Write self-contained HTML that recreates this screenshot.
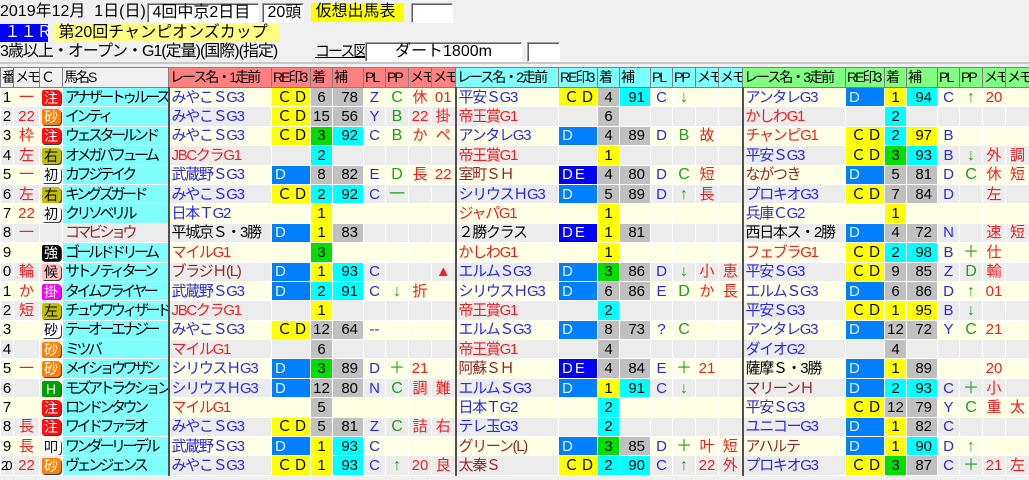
<!DOCTYPE html>
<html><head><meta charset="utf-8"><style>
body{margin:0;width:1029px;height:480px;overflow:hidden;background:#f0f0f0;font-family:"Liberation Sans","Noto Sans CJK JP",sans-serif;font-size:15px;color:#000;position:relative}
.a{position:absolute;white-space:nowrap;line-height:18px;font-size:16px}
.box{background:#fff;border:1px solid #a0a0a0;border-right-color:#fff;border-bottom-color:#fff;box-shadow:inset 1px 1px 0 #606060}
table{position:absolute;left:0;top:67px;border-collapse:collapse;table-layout:fixed;width:1029px}
td{border:1px solid #fff;padding:0;text-align:center;white-space:nowrap;overflow:hidden;height:18.4px;line-height:17px}
tr.hd td{background:#f0f0f0;border:1px solid #808080;height:19px;text-align:left;padding-left:1px;font-size:14px;letter-spacing:-2px}
tr.hd td.p{background:#ff8080}tr.hd td.q{background:#80ffff}tr.hd td.w{background:#80ff80}
tr.o{background:#ffffe6}tr.e{background:#ececec}
td.nm{background:#80ffff;text-align:left;padding-left:2px;letter-spacing:-3.5px}
td.n{text-align:left;border-left:2px solid #505050;padding-left:2px;letter-spacing:-1.3px}
td.m{color:#f02020}
.b{color:#2828f0}.r{color:#f02020}.br{color:#902828}.k{color:#000}
td.y{background:#ffff00;text-align:left;padding-left:5px;letter-spacing:1px}
td.d{background:#0080ff;color:#e8f4ff;text-align:left;padding-left:3px}
td.de{background:#0000ff;color:#fff;text-align:left;padding-left:3px;letter-spacing:2px}
td.c1{background:#ffff00}td.c2{background:#00ffff}td.c3{background:#00e000}td.cg{background:#c0c0c0}
td.h{text-align:right;padding-right:5px}
td.hc{background:#00ffff}td.hy{background:#ffff00}td.hg{background:#c0c0c0}
td.pl{color:#2828f0}td.pp{color:#20a020;font-size:16px}
.bd{display:inline-block;width:19px;height:16px;line-height:16px;border-radius:2px 4px 4px 2px;box-shadow:1px 1px 0 #404040;font-size:14px;vertical-align:top;margin-top:1px;letter-spacing:0}
.zr{background:#ff1010;color:#fff}.sa{background:#ff8000;color:#fff}.ol{background:#c0c000;color:#000}.wh{background:#fff;color:#000}.bk{background:#000;color:#fff}.pk{background:#ffc0c0;color:#000}.mg{background:#ff00ff;color:#fff}.gr{background:#00a000;color:#fff}
</style></head><body>
<div class="a" style="left:0;top:3px">2019年12月&nbsp;&nbsp;1日(日)</div>
<div class="a box" style="left:147px;top:3px;width:110px;height:18px">&nbsp;4回中京2日目</div>
<div class="a box" style="left:262px;top:3px;width:40px;height:18px">&nbsp;20頭</div>
<div class="a" style="left:311px;top:3px;width:93px;height:19px;background:#ffff00">&nbsp;仮想出馬表</div>
<div class="a box" style="left:411px;top:3px;width:40px;height:18px"></div>
<div class="a" style="left:0;top:24px;width:48px;height:18px;background:#0000ff;color:#fff">&nbsp;１１Ｒ</div>
<div class="a" style="left:54px;top:24px;width:225px;height:18px;background:#ffff80">&nbsp;第20回チャンピオンズカップ</div>
<div class="a" style="left:0;top:43px;letter-spacing:-1px">3歳以上・オープン・G1(定量)(国際)(指定)</div>
<div class="a" style="left:315px;top:43px;text-decoration:underline;font-size:15px;letter-spacing:-2px">コース図</div>
<div class="a box" style="left:365px;top:42px;width:155px;height:18px;text-align:center">ダート1800m</div>
<div class="a box" style="left:527px;top:42px;width:31px;height:18px"></div>
<div class="a" style="left:0;top:62px;width:1029px;height:2px;background:#c8c8c8"></div>
<table>
<colgroup><col style="width:13px"><col style="width:26px"><col style="width:23px"><col style="width:106px">
<col style="width:103px"><col style="width:39px"><col style="width:22px"><col style="width:31px"><col style="width:22px"><col style="width:23px"><col style="width:23px"><col style="width:24px">
<col style="width:103px"><col style="width:39px"><col style="width:22px"><col style="width:31px"><col style="width:22px"><col style="width:23px"><col style="width:23px"><col style="width:24px">
<col style="width:103px"><col style="width:39px"><col style="width:22px"><col style="width:31px"><col style="width:22px"><col style="width:23px"><col style="width:23px"><col style="width:24px"></colgroup>
<tr class="hd"><td>番</td><td>メモ</td><td>Ｃ</td><td>馬名S</td>
<td class="p">レース名・1走前</td><td class="p">RE印3</td><td class="p">着</td><td class="p">補</td><td class="p">PL</td><td class="p">PP</td><td class="p">メモ</td><td class="p">メモ</td>
<td class="q">レース名・2走前</td><td class="q">RE印3</td><td class="q">着</td><td class="q">補</td><td class="q">PL</td><td class="q">PP</td><td class="q">メモ</td><td class="q">メモ</td>
<td class="w">レース名・3走前</td><td class="w">RE印3</td><td class="w">着</td><td class="w">補</td><td class="w">PL</td><td class="w">PP</td><td class="w">メモ</td><td class="w">メモ</td></tr>

<tr class="o"><td>1</td><td class="m">一</td><td><span class="bd zr">注</span></td><td class="nm">アナザートゥルース</td>
<td class="n b">みやこＳG3</td><td class="y">ＣＤ</td><td class="cg">6</td><td class="h hg">78</td><td class="pl">Z</td><td class="pp">C</td><td class="m">休</td><td class="m">01</td>
<td class="n b">平安ＳG3</td><td class="y">ＣＤ</td><td class="cg">4</td><td class="h hc">91</td><td class="pl">C</td><td class="pp">↓</td><td></td><td></td>
<td class="n b">アンタレG3</td><td class="d">D</td><td class="c1">1</td><td class="h hc">94</td><td class="pl">C</td><td class="pp">↑</td><td class="m">20</td><td></td></tr>

<tr class="e"><td>2</td><td class="m">22</td><td><span class="bd sa">砂</span></td><td class="nm">インティ</td>
<td class="n b">みやこＳG3</td><td class="y">ＣＤ</td><td class="cg">15</td><td class="h hg">56</td><td class="pl">Y</td><td class="pp">B</td><td class="m">22</td><td class="m">掛</td>
<td class="n r">帝王賞G1</td><td></td><td class="cg">6</td><td></td><td></td><td></td><td></td><td></td>
<td class="n r">かしわG1</td><td></td><td class="c2">2</td><td></td><td></td><td></td><td></td><td></td></tr>

<tr class="o"><td>3</td><td class="m">枠</td><td><span class="bd zr">注</span></td><td class="nm">ウェスタールンド</td>
<td class="n b">みやこＳG3</td><td class="y">ＣＤ</td><td class="c3">3</td><td class="h hc">92</td><td class="pl">C</td><td class="pp">B</td><td class="m">か</td><td class="m">ペ</td>
<td class="n b">アンタレG3</td><td class="d">D</td><td class="cg">4</td><td class="h hg">89</td><td class="pl">D</td><td class="pp">B</td><td class="m">故</td><td></td>
<td class="n r">チャンピG1</td><td class="y">ＣＤ</td><td class="c2">2</td><td class="h hy">97</td><td class="pl">B</td><td></td><td></td><td></td></tr>

<tr class="e"><td>4</td><td class="m">左</td><td><span class="bd ol">右</span></td><td class="nm">オメガパフューム</td>
<td class="n r">JBCクラG1</td><td></td><td class="c2">2</td><td></td><td></td><td></td><td></td><td></td>
<td class="n r">帝王賞G1</td><td></td><td class="c1">1</td><td></td><td></td><td></td><td></td><td></td>
<td class="n b">平安ＳG3</td><td class="y">ＣＤ</td><td class="c3">3</td><td class="h hc">93</td><td class="pl">B</td><td class="pp">↓</td><td class="m">外</td><td class="m">調</td></tr>

<tr class="o"><td>5</td><td class="m">一</td><td><span class="bd wh">初</span></td><td class="nm">カフジテイク</td>
<td class="n b">武蔵野ＳG3</td><td class="d">D</td><td class="cg">8</td><td class="h hg">82</td><td class="pl">E</td><td class="pp">D</td><td class="m">長</td><td class="m">22</td>
<td class="n br">室町ＳＨ</td><td class="de">DE</td><td class="cg">4</td><td class="h hg">80</td><td class="pl">D</td><td class="pp">C</td><td class="m">短</td><td></td>
<td class="n br">ながつき</td><td class="d">D</td><td class="cg">5</td><td class="h hg">81</td><td class="pl">D</td><td class="pp">C</td><td class="m">休</td><td class="m">短</td></tr>

<tr class="e"><td>6</td><td class="m">左</td><td><span class="bd ol">右</span></td><td class="nm">キングズガード</td>
<td class="n b">みやこＳG3</td><td class="y">ＣＤ</td><td class="c2">2</td><td class="h hc">92</td><td class="pl">C</td><td class="pp">一</td><td></td><td></td>
<td class="n b">シリウスＨG3</td><td class="d">D</td><td class="cg">5</td><td class="h hg">89</td><td class="pl">D</td><td class="pp">↑</td><td class="m">長</td><td></td>
<td class="n b">プロキオG3</td><td class="y">ＣＤ</td><td class="cg">7</td><td class="h hg">84</td><td class="pl">D</td><td></td><td class="m">左</td><td></td></tr>

<tr class="o"><td>7</td><td class="m">22</td><td><span class="bd wh">初</span></td><td class="nm">クリソベリル</td>
<td class="n b">日本ＴG2</td><td></td><td class="c1">1</td><td></td><td></td><td></td><td></td><td></td>
<td class="n r">ジャパG1</td><td></td><td class="c1">1</td><td></td><td></td><td></td><td></td><td></td>
<td class="n b">兵庫ＣG2</td><td></td><td class="c1">1</td><td></td><td></td><td></td><td></td><td></td></tr>

<tr class="e"><td>8</td><td class="m">一</td><td></td><td class="br" style="text-align:left;padding-left:2px;letter-spacing:-3.5px">コマビショウ</td>
<td class="n k">平城京Ｓ・3勝</td><td class="d">D</td><td class="c1">1</td><td class="h hg">83</td><td></td><td></td><td></td><td></td>
<td class="n k">２勝クラス</td><td class="de">DE</td><td class="c1">1</td><td class="h hg">81</td><td></td><td></td><td></td><td></td>
<td class="n k">西日本ス・2勝</td><td class="d">D</td><td class="cg">4</td><td class="h hg">72</td><td class="pl">N</td><td></td><td class="m">速</td><td class="m">短</td></tr>

<tr class="o"><td>9</td><td></td><td><span class="bd bk">強</span></td><td class="nm">ゴールドドリーム</td>
<td class="n r">マイルG1</td><td></td><td class="c3">3</td><td></td><td></td><td></td><td></td><td></td>
<td class="n r">かしわG1</td><td></td><td class="c1">1</td><td></td><td></td><td></td><td></td><td></td>
<td class="n r">フェブラG1</td><td class="y">ＣＤ</td><td class="c2">2</td><td class="h hc">98</td><td class="pl">B</td><td class="pp">＋</td><td class="m">仕</td><td></td></tr>

<tr class="e"><td>0</td><td class="m">輪</td><td><span class="bd pk">候</span></td><td class="nm">サトノティターン</td>
<td class="n br">ブラジＨ(L)</td><td class="d">D</td><td class="c1">1</td><td class="h hc">93</td><td class="pl">C</td><td></td><td></td><td class="m">▲</td>
<td class="n b">エルムＳG3</td><td class="d">D</td><td class="c3">3</td><td class="h hg">86</td><td class="pl">D</td><td class="pp">↓</td><td class="m">小</td><td class="m">恵</td>
<td class="n b">平安ＳG3</td><td class="y">ＣＤ</td><td class="cg">9</td><td class="h hg">85</td><td class="pl">Z</td><td class="pp">D</td><td class="m">輸</td><td></td></tr>

<tr class="o"><td>1</td><td class="m">か</td><td><span class="bd mg">掛</span></td><td class="nm">タイムフライヤー</td>
<td class="n b">武蔵野ＳG3</td><td class="d">D</td><td class="c2">2</td><td class="h hc">91</td><td class="pl">C</td><td class="pp">↓</td><td class="m">折</td><td></td>
<td class="n b">シリウスＨG3</td><td class="d">D</td><td class="cg">6</td><td class="h hg">86</td><td class="pl">E</td><td class="pp">D</td><td class="m">か</td><td class="m">長</td>
<td class="n b">エルムＳG3</td><td class="d">D</td><td class="cg">6</td><td class="h hg">86</td><td class="pl">D</td><td class="pp">↑</td><td class="m">01</td><td></td></tr>

<tr class="e"><td>2</td><td class="m">短</td><td><span class="bd ol">左</span></td><td class="nm">チュウワウィザード</td>
<td class="n r">JBCクラG1</td><td></td><td class="c1">1</td><td></td><td></td><td></td><td></td><td></td>
<td class="n r">帝王賞G1</td><td></td><td class="c2">2</td><td></td><td></td><td></td><td></td><td></td>
<td class="n b">平安ＳG3</td><td class="y">ＣＤ</td><td class="c1">1</td><td class="h hy">95</td><td class="pl">B</td><td class="pp">↓</td><td></td><td></td></tr>

<tr class="o"><td>3</td><td></td><td><span class="bd wh">砂</span></td><td class="nm">テーオーエナジー</td>
<td class="n b">みやこＳG3</td><td class="y">ＣＤ</td><td class="cg">12</td><td class="h hg">64</td><td class="pl">--</td><td></td><td></td><td></td>
<td class="n b">エルムＳG3</td><td class="d">D</td><td class="cg">8</td><td class="h hg">73</td><td class="pl">?</td><td class="pp">C</td><td></td><td></td>
<td class="n b">アンタレG3</td><td class="d">D</td><td class="cg">12</td><td class="h hg">72</td><td class="pl">Y</td><td class="pp">C</td><td class="m">21</td><td></td></tr>

<tr class="e"><td>4</td><td></td><td><span class="bd sa">砂</span></td><td class="nm">ミツバ</td>
<td class="n r">マイルG1</td><td></td><td class="cg">6</td><td></td><td></td><td></td><td></td><td></td>
<td class="n r">帝王賞G1</td><td></td><td class="cg">4</td><td></td><td></td><td></td><td></td><td></td>
<td class="n b">ダイオG2</td><td></td><td class="cg">4</td><td></td><td></td><td></td><td></td><td></td></tr>

<tr class="o"><td>5</td><td class="m">一</td><td><span class="bd sa">砂</span></td><td class="nm">メイショウワザシ</td>
<td class="n b">シリウスＨG3</td><td class="d">D</td><td class="c3">3</td><td class="h hg">89</td><td class="pl">D</td><td class="pp">＋</td><td class="m">21</td><td></td>
<td class="n br">阿蘇ＳＨ</td><td class="de">DE</td><td class="cg">4</td><td class="h hg">84</td><td class="pl">E</td><td class="pp">＋</td><td class="m">21</td><td></td>
<td class="n k">薩摩Ｓ・3勝</td><td class="d">D</td><td class="c1">1</td><td class="h hg">89</td><td></td><td></td><td class="m">20</td><td></td></tr>

<tr class="e"><td>6</td><td></td><td><span class="bd gr">H</span></td><td class="nm">モズアトラクション</td>
<td class="n b">シリウスＨG3</td><td class="d">D</td><td class="cg">12</td><td class="h hg">80</td><td class="pl">N</td><td class="pp">C</td><td class="m">調</td><td class="m">難</td>
<td class="n b">エルムＳG3</td><td class="d">D</td><td class="c1">1</td><td class="h hc">91</td><td class="pl">C</td><td class="pp">↓</td><td></td><td></td>
<td class="n br">マリーンＨ</td><td class="d">D</td><td class="c2">2</td><td class="h hc">93</td><td class="pl">C</td><td class="pp">＋</td><td class="m">小</td><td></td></tr>

<tr class="o"><td>7</td><td></td><td><span class="bd zr">注</span></td><td class="nm">ロンドンタウン</td>
<td class="n r">マイルG1</td><td></td><td class="cg">5</td><td></td><td></td><td></td><td></td><td></td>
<td class="n b">日本ＴG2</td><td></td><td class="c2">2</td><td></td><td></td><td></td><td></td><td></td>
<td class="n b">平安ＳG3</td><td class="y">ＣＤ</td><td class="cg">12</td><td class="h hg">79</td><td class="pl">Y</td><td class="pp">C</td><td class="m">重</td><td class="m">太</td></tr>

<tr class="e"><td>8</td><td class="m">長</td><td><span class="bd zr">注</span></td><td class="nm">ワイドファラオ</td>
<td class="n b">みやこＳG3</td><td class="y">ＣＤ</td><td class="cg">5</td><td class="h hg">81</td><td class="pl">Z</td><td class="pp">C</td><td class="m">詰</td><td class="m">右</td>
<td class="n b">テレ玉G3</td><td></td><td class="c2">2</td><td></td><td></td><td></td><td></td><td></td>
<td class="n b">ユニコーG3</td><td class="d">D</td><td class="c1">1</td><td class="h hg">82</td><td class="pl">C</td><td></td><td></td><td></td></tr>

<tr class="o"><td>9</td><td class="m">長</td><td><span class="bd wh">叩</span></td><td class="nm">ワンダーリーデル</td>
<td class="n b">武蔵野ＳG3</td><td class="d">D</td><td class="c1">1</td><td class="h hc">93</td><td class="pl">C</td><td></td><td></td><td></td>
<td class="n br">グリーン(L)</td><td class="d">D</td><td class="c3">3</td><td class="h hg">85</td><td class="pl">D</td><td class="pp">＋</td><td class="m">叶</td><td class="m">短</td>
<td class="n br">アハルテ</td><td class="d">D</td><td class="c1">1</td><td class="h hc">90</td><td class="pl">D</td><td class="pp">↑</td><td></td><td></td></tr>

<tr class="e"><td style="text-align:left;letter-spacing:-3px;font-size:13px">20</td><td class="m">22</td><td><span class="bd sa">砂</span></td><td class="nm">ヴェンジェンス</td>
<td class="n b">みやこＳG3</td><td class="y">ＣＤ</td><td class="c1">1</td><td class="h hc">93</td><td class="pl">C</td><td class="pp">↑</td><td class="m">20</td><td class="m">良</td>
<td class="n br">太秦Ｓ</td><td class="y">ＣＤ</td><td class="c2">2</td><td class="h hc">90</td><td class="pl">C</td><td class="pp">↑</td><td class="m">22</td><td class="m">外</td>
<td class="n b">プロキオG3</td><td class="y">ＣＤ</td><td class="c3">3</td><td class="h hg">87</td><td class="pl">C</td><td class="pp">＋</td><td class="m">21</td><td class="m">左</td></tr>
</table>
</body></html>
